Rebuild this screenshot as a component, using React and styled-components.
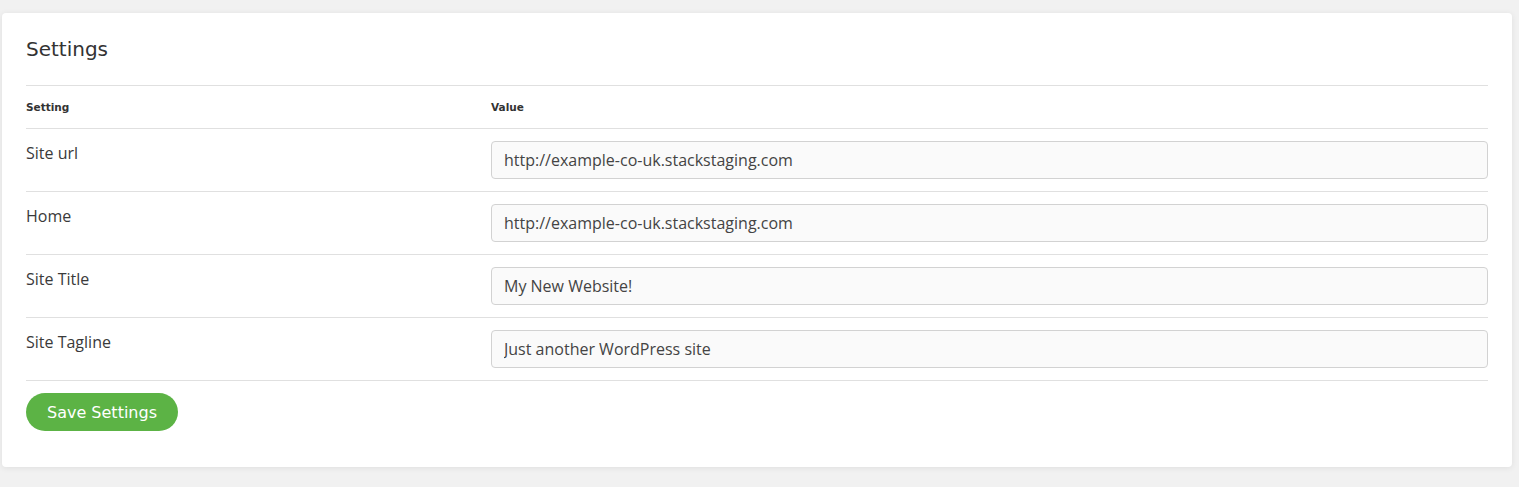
import styled, { createGlobalStyle } from "styled-components";

const GlobalStyle = createGlobalStyle`
    body {
        margin: 0;
        background: #f1f1f1;
        font-family: 'Open Sans', sans-serif;
    }
`

const Page = styled.div`
    padding: 13px 7px 21px 2px;
`

const Card = styled.div`
    background: #fff;
    border-radius: 4px;
    box-shadow: 0 1px 6px rgba(0, 0, 0, 0.08);
    padding: 26px 24px 36px 24px;
`

const Title = styled.h2`
    margin: 0;
    font-family: 'DejaVu Sans', sans-serif;
    font-weight: 400;
    font-size: 20px;
    color: #333;
    line-height: 20px;
    padding-bottom: 26px;
    border-bottom: 1px solid #e0e0e0;
`

const Row = styled.div`
    display: grid;
    grid-template-columns: 465px 1fr;
    align-items: start;
    border-bottom: 1px solid #e0e0e0;
    padding: ${props => props.$head ? "14px 0 14px" : "12px 0 12px"};
`

const HeadCell = styled.div`
    font-family: 'DejaVu Sans', sans-serif;
    font-weight: 600;
    font-size: 10.5px;
    color: #333;
    line-height: 14px;
`

const Label = styled.div`
    font-size: 16px;
    color: #3a3a3a;
    line-height: 22px;
    padding-top: 1px;
`

const ValueInput = styled.input`
    display: block;
    width: 100%;
    box-sizing: border-box;
    height: 38px;
    border: 1px solid #d2d2d2;
    border-radius: 4px;
    background: #fafafa;
    padding: 0 12px;
    font-family: 'Open Sans', sans-serif;
    font-size: 16px;
    color: #444;
    outline: none;
`

const ButtonRow = styled.div`
    padding-top: 12px;
`

const SaveButton = styled.button`
    height: 38px;
    padding: 0 21px;
    border: none;
    border-radius: 19px;
    background: #5cb345;
    color: #fff;
    font-family: 'DejaVu Sans', sans-serif;
    font-weight: 500;
    font-size: 16px;
    cursor: pointer;
`

const settings = [
    { label: "Site url", value: "http://example-co-uk.stackstaging.com" },
    { label: "Home", value: "http://example-co-uk.stackstaging.com" },
    { label: "Site Title", value: "My New Website!" },
    { label: "Site Tagline", value: "Just another WordPress site" },
]

const App = () => {
    return (
        <Page>
            <GlobalStyle />
            <Card>
                <Title>Settings</Title>
                <Row $head>
                    <HeadCell>Setting</HeadCell>
                    <HeadCell>Value</HeadCell>
                </Row>
                {settings.map(s => (
                    <Row key={s.label}>
                        <Label>{s.label}</Label>
                        <ValueInput type="text" defaultValue={s.value} />
                    </Row>
                ))}
                <ButtonRow>
                    <SaveButton>Save Settings</SaveButton>
                </ButtonRow>
            </Card>
        </Page>
    )
}

export default App;
